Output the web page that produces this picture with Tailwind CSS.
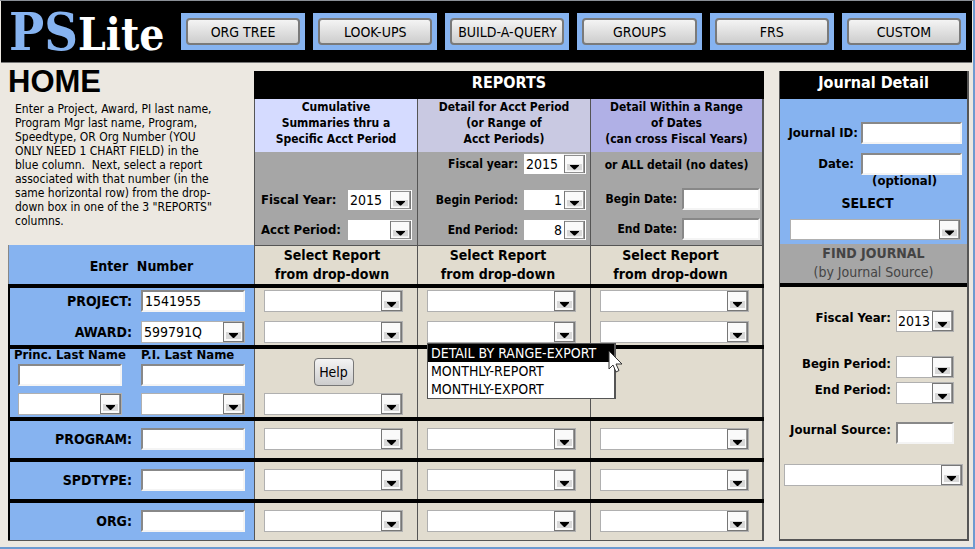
<!DOCTYPE html>
<html lang="en">
<head>
    <meta charset="UTF-8">
    <meta name="viewport" content="width=device-width, initial-scale=1.0">
    <title>PSLite - Home</title>
    <script src="https://cdn.jsdelivr.net/npm/@tailwindcss/browser@4"></script>
</head>
<body class="bg-[#ece8e1] min-h-screen text-black font-['DejaVu_Sans_Condensed','DejaVu_Sans',sans-serif] border-t border-t-[#8a8f96] border-r-2 border-r-[#6d9ad0] border-b-2 border-b-[#6d9ad0]">
    <header class="ml-px mr-px bg-black border-b border-[#777] flex items-center h-[62px] pl-2 pr-[6px]">
        <h1 class="w-[172px] shrink-0 flex items-baseline leading-none font-bold font-['DejaVu_Serif_Condensed','DejaVu_Serif',serif]">
            <span class="text-[52px] text-[#86b3f0]">PS</span><span class="text-[44px] text-white">Lite</span>
        </h1>
        <nav class="flex-1 grid grid-cols-6 gap-2 text-sm">
            <div class="bg-[#86b3f0] p-[5px]"><button class="block w-full h-[27px] rounded border-2 border-[#7a7a7a] bg-linear-to-b from-[#f4f4f4] to-[#cdcdcd] whitespace-nowrap leading-none">ORG TREE</button></div>
            <div class="bg-[#86b3f0] p-[5px]"><button class="block w-full h-[27px] rounded border-2 border-[#7a7a7a] bg-linear-to-b from-[#f4f4f4] to-[#cdcdcd] whitespace-nowrap leading-none">LOOK-UPS</button></div>
            <div class="bg-[#86b3f0] p-[5px]"><button class="block w-full h-[27px] rounded border-2 border-[#7a7a7a] bg-linear-to-b from-[#f4f4f4] to-[#cdcdcd] whitespace-nowrap leading-none">BUILD-A-QUERY</button></div>
            <div class="bg-[#86b3f0] p-[5px]"><button class="block w-full h-[27px] rounded border-2 border-[#7a7a7a] bg-linear-to-b from-[#f4f4f4] to-[#cdcdcd] whitespace-nowrap leading-none">GROUPS</button></div>
            <div class="bg-[#86b3f0] p-[5px]"><button class="block w-full h-[27px] rounded border-2 border-[#7a7a7a] bg-linear-to-b from-[#f4f4f4] to-[#cdcdcd] whitespace-nowrap leading-none">FRS</button></div>
            <div class="bg-[#86b3f0] p-[5px]"><button class="block w-full h-[27px] rounded border-2 border-[#7a7a7a] bg-linear-to-b from-[#f4f4f4] to-[#cdcdcd] whitespace-nowrap leading-none">CUSTOM</button></div>
        </nav>
    </header>

    <main class="grid grid-cols-[756fr_190fr] gap-[15px] pt-2 pl-2 pr-1 pb-[6px]">
        <div>
            <!-- Intro and report criteria -->
            <div class="grid grid-cols-[246fr_510fr]">
                <div>
                    <h2 class="text-[31px] leading-[22px] font-bold font-['Liberation_Sans',sans-serif]">HOME</h2>
                    <p class="pl-[7px] pt-[9px] text-xs leading-[14px] whitespace-nowrap">
                        Enter a Project, Award, PI last name,<br>
                        Program Mgr last name, Program,<br>
                        Speedtype, OR Org Number (YOU<br>
                        ONLY NEED 1 CHART FIELD) in the<br>
                        blue column.&nbsp; Next, select a report<br>
                        associated with that number (in the<br>
                        same horizontal row) from the drop-<br>
                        down box in one of the 3 "REPORTS"<br>
                        columns.
                    </p>
                </div>
                <section class="flex flex-col">
                    <h2 class="bg-black text-white text-base leading-6 pb-1 font-bold text-center">REPORTS</h2>
                    <div class="flex-1 grid grid-cols-[163fr_173fr_174fr] text-xs font-bold whitespace-nowrap">
                        <div class="border-l border-[#555] bg-[#a6a6a6]">
                            <h3 class="bg-[#d5dbff] text-center leading-4 pb-[5px]">Cumulative<br>Summaries thru a<br>Specific Acct Period</h3>
                            <div class="grid grid-cols-[1fr_64px] items-center gap-y-[10px] pt-[38px] pb-[5px] pl-[6px] pr-[5px] text-[13px] leading-5">
                                <label for="fy1">Fiscal Year:</label>
                                <span class="combo relative"><select id="fy1" class="block appearance-none w-full h-5 bg-white pl-[2px] text-sm font-normal leading-none"><option>2015</option></select></span>
                                <label for="ap1">Acct Period:</label>
                                <span class="combo relative"><select id="ap1" class="block appearance-none w-full h-5 bg-white pl-[2px] text-sm font-normal"></select></span>
                            </div>
                        </div>
                        <div class="border-l border-[#555] bg-[#a6a6a6]">
                            <h3 class="bg-[#c9c9e2] text-center leading-4 pb-[5px]">Detail for Acct Period<br>(or Range of<br>Acct Periods)</h3>
                            <div class="grid grid-cols-[1fr_62px] items-center gap-x-[6px] text-right pt-[2px] pb-[5px] pr-1">
                                <label for="fy2" class="mb-4">Fiscal year:</label>
                                <span class="combo relative mb-4"><select id="fy2" class="block appearance-none w-full h-5 bg-white pl-[2px] text-sm font-normal leading-none"><option>2015</option></select></span>
                                <label for="bp2" class="mb-[10px]">Begin Period:</label>
                                <span class="combo relative mb-[10px]"><select id="bp2" class="block appearance-none w-full h-5 bg-white pr-6 text-right text-sm font-normal leading-none"><option>1</option></select></span>
                                <label for="ep2">End Period:</label>
                                <span class="combo relative"><select id="ep2" class="block appearance-none w-full h-5 bg-white pr-6 text-right text-sm font-normal leading-none"><option>8</option></select></span>
                            </div>
                        </div>
                        <div class="border-l border-r-2 border-[#555] bg-[#a6a6a6]">
                            <h3 class="bg-[#b0b0e6] text-center leading-4 pb-[5px]">Detail Within a Range<br>of Dates<br>(can cross Fiscal Years)</h3>
                            <p class="text-center leading-5 pt-[3px]">or ALL detail (no dates)</p>
                            <div class="grid grid-cols-[1fr_78px] items-center gap-x-[5px] gap-y-2 text-right pt-[13px] pr-[2px]">
                                <label for="bd3">Begin Date:</label>
                                <input id="bd3" type="text" class="w-full h-[22px] bg-white border-2 border-t-[#888] border-l-[#888] border-b-[#f4f4f4] border-r-[#f4f4f4]">
                                <label for="ed3">End Date:</label>
                                <input id="ed3" type="text" class="w-full h-[22px] bg-white border-2 border-t-[#888] border-l-[#888] border-b-[#f4f4f4] border-r-[#f4f4f4]">
                            </div>
                        </div>
                    </div>
                </section>
            </div>

            <!-- Column titles -->
            <div class="grid grid-cols-[246fr_163fr_173fr_174fr] border-b-4 border-black bg-[#e1dccf] text-center text-sm font-bold">
                <div class="bg-[#86b3f0] border-l border-[#888] leading-[43px] whitespace-pre h-[39px] pl-5">Enter  Number</div>
                <div class="border-l border-t border-[#555] leading-[19px] pr-2">Select Report<br>from drop-down</div>
                <div class="border-l border-t border-[#555] leading-[19px] pr-3">Select Report<br>from drop-down</div>
                <div class="border-l border-t border-r-2 border-[#555] leading-[19px] pr-3">Select Report<br>from drop-down</div>
            </div>

            <div class="grid grid-cols-[246fr_163fr_173fr_174fr] border-b-4 border-black bg-[#e1dccf]">
                <div class="bg-[#86b3f0] border-l-2 border-black grid grid-cols-[1fr_104px] items-center gap-x-[9px] gap-y-[9px] py-[2px] pr-[9px] text-right text-sm leading-5 font-bold">
                    <label for="project">PROJECT:</label>
                    <input id="project" type="text" value="1541955" class="w-full h-[22px] bg-white pl-[2px] text-sm font-normal border-2 border-t-[#888] border-l-[#888] border-b-[#f4f4f4] border-r-[#f4f4f4]">
                    <label for="award">AWARD:</label>
                    <span class="combo relative"><select id="award" class="block appearance-none w-full h-[22px] bg-white border border-[#b0b0b0] pl-[2px] text-sm font-normal leading-none"><option>599791Q</option></select></span>
                </div>
                <div class="border-l border-[#555] flex flex-col gap-[9px] py-[2px] pl-[9px] pr-[14px]">
                    <span class="combo relative"><select aria-label="Project summary report" class="block appearance-none w-full h-[22px] bg-white border border-[#b0b0b0]"></select></span>
                    <span class="combo relative"><select aria-label="Award summary report" class="block appearance-none w-full h-[22px] bg-white border border-[#b0b0b0]"></select></span>
                </div>
                <div class="border-l border-[#555] flex flex-col gap-[9px] py-[2px] pl-[9px] pr-[14px]">
                    <span class="combo relative"><select aria-label="Project period report" class="block appearance-none w-full h-[22px] bg-white border border-[#b0b0b0]"></select></span>
                    <div class="relative">
                        <span class="combo relative block"><select aria-label="Award period report" class="block appearance-none w-full h-[22px] bg-white border border-[#b0b0b0]"></select></span>
                        <ul role="listbox" aria-label="Award period report choices" class="absolute z-10 top-[22px] left-0 w-[189px] bg-white border border-[#555] border-r-2 text-sm leading-[18px] whitespace-nowrap">
                            <li role="option" aria-selected="true" class="bg-black text-white pl-[3px] leading-[18px]">DETAIL BY RANGE-EXPORT</li>
                            <li role="option" class="pl-[3px]">MONTHLY-REPORT</li>
                            <li role="option" class="pl-[3px]">MONTHLY-EXPORT</li>
                        </ul>
                        <svg class="absolute z-20 top-[29px] left-[181px]" width="16" height="23" viewBox="0 0 16 23">
                            <path d="M1 1v18l4-4 3 7 3-1.500-3-6.500h6z" fill="#fff" stroke="#333" stroke-width="1"/>
                        </svg>
                    </div>
                </div>
                <div class="border-l border-r-2 border-[#555] flex flex-col gap-[9px] py-[2px] pl-[9px] pr-[13px]">
                    <span class="combo relative"><select aria-label="Project date report" class="block appearance-none w-full h-[22px] bg-white border border-[#b0b0b0]"></select></span>
                    <span class="combo relative"><select aria-label="Award date report" class="block appearance-none w-full h-[22px] bg-white border border-[#b0b0b0]"></select></span>
                </div>
            </div>

            <div class="grid grid-cols-[246fr_163fr_173fr_174fr] border-b-4 border-black bg-[#e1dccf]">
                <div class="bg-[#86b3f0] border-l-2 border-black grid grid-cols-2 gap-x-[19px] pl-2 pr-[9px] pb-[2px] text-xs font-bold whitespace-nowrap">
                    <label for="princ" class="text-[13px] leading-[11px] pb-1 -ml-1">Princ. Last Name</label>
                    <label for="pi" class="text-[13px] leading-[11px] pb-1">P.I. Last Name</label>
                    <input id="princ" type="text" class="w-full h-[22px] bg-white border-2 border-t-[#888] border-l-[#888] border-b-[#f4f4f4] border-r-[#f4f4f4]">
                    <input id="pi" type="text" class="w-full h-[22px] bg-white border-2 border-t-[#888] border-l-[#888] border-b-[#f4f4f4] border-r-[#f4f4f4]">
                    <span class="combo relative mt-[7px]"><select aria-label="Principal" class="block appearance-none w-full h-[22px] bg-white border border-[#b0b0b0]"></select></span>
                    <span class="combo relative mt-[7px]"><select aria-label="P.I." class="block appearance-none w-full h-[22px] bg-white border border-[#b0b0b0]"></select></span>
                </div>
                <div class="border-l border-[#555] flex flex-col justify-between pt-[9px] pb-[2px] pl-[9px] pr-[14px]">
                    <button class="self-center w-10 h-7 rounded border border-[#777] bg-linear-to-b from-[#f4f4f4] to-[#cdcdcd] text-sm leading-none">Help</button>
                    <span class="combo relative"><select aria-label="P.I. summary report" class="block appearance-none w-full h-[22px] bg-white border border-[#b0b0b0]"></select></span>
                </div>
                <div class="border-l border-[#555]"></div>
                <div class="border-l border-r-2 border-[#555]"></div>
            </div>

            <div class="grid grid-cols-[246fr_163fr_173fr_174fr] border-b-4 border-black bg-[#e1dccf]">
                <div class="bg-[#86b3f0] border-l-2 border-black grid grid-cols-[1fr_104px] items-center gap-x-[9px] pt-[7px] pb-2 pr-[9px] text-right text-sm leading-5 font-bold">
                    <label for="program">PROGRAM:</label>
                    <input id="program" type="text" class="w-full h-[22px] bg-white border-2 border-t-[#888] border-l-[#888] border-b-[#f4f4f4] border-r-[#f4f4f4]">
                </div>
                <div class="border-l border-[#555] pt-[7px] pb-2 pl-[9px] pr-[14px]"><span class="combo relative block"><select aria-label="Program summary report" class="block appearance-none w-full h-[22px] bg-white border border-[#b0b0b0]"></select></span></div>
                <div class="border-l border-[#555] pt-[7px] pb-2 pl-[9px] pr-[14px]"><span class="combo relative block"><select aria-label="Program period report" class="block appearance-none w-full h-[22px] bg-white border border-[#b0b0b0]"></select></span></div>
                <div class="border-l border-r-2 border-[#555] pt-[7px] pb-2 pl-[9px] pr-[13px]"><span class="combo relative block"><select aria-label="Program date report" class="block appearance-none w-full h-[22px] bg-white border border-[#b0b0b0]"></select></span></div>
            </div>

            <div class="grid grid-cols-[246fr_163fr_173fr_174fr] border-b-4 border-black bg-[#e1dccf]">
                <div class="bg-[#86b3f0] border-l-2 border-black grid grid-cols-[1fr_104px] items-center gap-x-[9px] pt-[7px] pb-2 pr-[9px] text-right text-sm leading-5 font-bold">
                    <label for="spdtype">SPDTYPE:</label>
                    <input id="spdtype" type="text" class="w-full h-[22px] bg-white border-2 border-t-[#888] border-l-[#888] border-b-[#f4f4f4] border-r-[#f4f4f4]">
                </div>
                <div class="border-l border-[#555] pt-[7px] pb-2 pl-[9px] pr-[14px]"><span class="combo relative block"><select aria-label="Speedtype summary report" class="block appearance-none w-full h-[22px] bg-white border border-[#b0b0b0]"></select></span></div>
                <div class="border-l border-[#555] pt-[7px] pb-2 pl-[9px] pr-[14px]"><span class="combo relative block"><select aria-label="Speedtype period report" class="block appearance-none w-full h-[22px] bg-white border border-[#b0b0b0]"></select></span></div>
                <div class="border-l border-r-2 border-[#555] pt-[7px] pb-2 pl-[9px] pr-[13px]"><span class="combo relative block"><select aria-label="Speedtype date report" class="block appearance-none w-full h-[22px] bg-white border border-[#b0b0b0]"></select></span></div>
            </div>

            <div class="grid grid-cols-[246fr_163fr_173fr_174fr] border-b border-[#555] bg-[#e1dccf]">
                <div class="bg-[#86b3f0] border-l-2 border-black grid grid-cols-[1fr_104px] items-center gap-x-[9px] pt-[7px] pb-2 pr-[9px] text-right text-sm leading-5 font-bold">
                    <label for="org">ORG:</label>
                    <input id="org" type="text" class="w-full h-[22px] bg-white border-2 border-t-[#888] border-l-[#888] border-b-[#f4f4f4] border-r-[#f4f4f4]">
                </div>
                <div class="border-l border-[#555] pt-[7px] pb-2 pl-[9px] pr-[14px]"><span class="combo relative block"><select aria-label="Org summary report" class="block appearance-none w-full h-[22px] bg-white border border-[#b0b0b0]"></select></span></div>
                <div class="border-l border-[#555] pt-[7px] pb-2 pl-[9px] pr-[14px]"><span class="combo relative block"><select aria-label="Org period report" class="block appearance-none w-full h-[22px] bg-white border border-[#b0b0b0]"></select></span></div>
                <div class="border-l border-r-2 border-[#555] pt-[7px] pb-2 pl-[9px] pr-[13px]"><span class="combo relative block"><select aria-label="Org date report" class="block appearance-none w-full h-[22px] bg-white border border-[#b0b0b0]"></select></span></div>
            </div>
        </div>

        <!-- Journal panel -->
        <section class="flex flex-col border-l border-r-2 border-b-2 border-[#555] bg-[#e1dccf] text-[13px] font-bold whitespace-nowrap">
            <h2 class="bg-black text-white text-base leading-6 pb-1 text-center">Journal Detail</h2>
            <div class="bg-[#86b3f0] pt-[23px] pb-1">
                <div class="grid grid-cols-[1fr_101px] items-center gap-x-[3px] gap-y-[9px] text-right leading-5 pr-[5px]">
                    <label for="jid">Journal ID:</label>
                    <input id="jid" type="text" class="w-full h-[22px] bg-white border-2 border-t-[#888] border-l-[#888] border-b-[#f4f4f4] border-r-[#f4f4f4]">
                    <label for="jdate" class="pr-1">Date:</label>
                    <input id="jdate" type="text" class="w-full h-[22px] bg-white border-2 border-t-[#888] border-l-[#888] border-b-[#f4f4f4] border-r-[#f4f4f4]">
                </div>
                <p class="text-right leading-[12px] pr-[30px]">(optional)</p>
                <label for="jselect" class="block text-center text-sm leading-[32px] pr-3">SELECT</label>
                <span class="combo relative block ml-[10px] mr-[6px]"><select id="jselect" class="block appearance-none w-full h-[21px] bg-white border border-[#b0b0b0]"></select></span>
            </div>
            <div class="bg-[#a6a6a6] text-[#444] text-center text-sm leading-[19px] border-b-4 border-b-black pb-px">
                <h3>FIND JOURNAL</h3>
                <p class="font-normal">(by Journal Source)</p>
            </div>
            <div class="grid grid-cols-[1fr_58px] items-start gap-x-[5px] text-right pt-[23px] pr-[13px]">
                <label for="jfy" class="leading-4">Fiscal Year:</label>
                <span class="combo relative mb-6"><select id="jfy" class="block appearance-none w-full h-[22px] bg-white border border-[#b0b0b0] pl-px text-sm font-normal leading-none"><option>2013</option></select></span>
                <label for="jbp" class="leading-4">Begin Period:</label>
                <span class="combo relative mb-1"><select id="jbp" class="block appearance-none w-full h-[22px] bg-white border border-[#b0b0b0]"></select></span>
                <label for="jep" class="leading-4">End Period:</label>
                <span class="combo relative mb-[18px]"><select id="jep" class="block appearance-none w-full h-[22px] bg-white border border-[#b0b0b0]"></select></span>
                <label for="jsrc" class="leading-4">Journal Source:</label>
                <input id="jsrc" type="text" class="w-full h-[22px] bg-white border-2 border-t-[#888] border-l-[#888] border-b-[#f4f4f4] border-r-[#f4f4f4]">
            </div>
            <span class="combo relative block mt-5 ml-1 mr-1"><select aria-label="Journal report" class="block appearance-none w-full h-[22px] bg-white border border-[#b0b0b0]"></select></span>
        </section>
    </main>

    <script>
        const arrow = `<svg class="absolute top-0 right-0 h-full w-[22px] pointer-events-none" viewBox="0 0 22 22" preserveAspectRatio="none">
            <rect x="0.500" y="1.500" width="20" height="19" fill="#fafafa" stroke="#777"/>
            <path d="M19.500 2v18" stroke="#999"/>
            <rect x="3" y="11" width="15" height="7" fill="#d8d8d8"/>
            <path d="M6 12h9v1l-4 4h-1l-4-4z" fill="#000"/>
        </svg>`;

        document.querySelectorAll('.combo').forEach(combo => combo.insertAdjacentHTML('beforeend', arrow));
    </script>
</body>
</html>
